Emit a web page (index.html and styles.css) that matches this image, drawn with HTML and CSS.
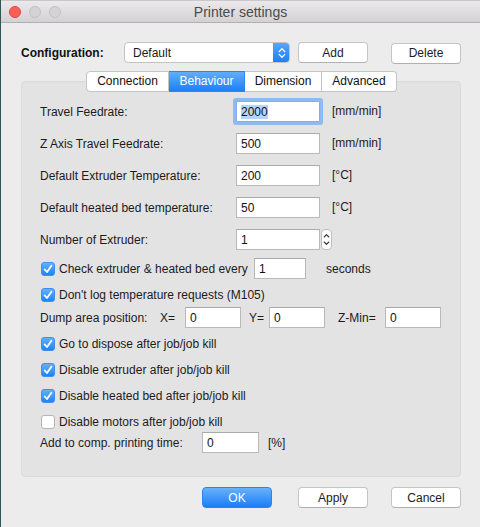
FILE: index.html
```html
<!DOCTYPE html>
<html>
<head>
<meta charset="utf-8">
<link rel="stylesheet" href="styles.css">
</head>
<body>
<div class="window">
  <div class="titlebar">
    <div class="lights">
      <span class="light red"></span>
      <span class="light gray"></span>
      <span class="light gray"></span>
    </div>
    <div class="title">Printer settings</div>
    <div></div>
  </div>
  <div class="content">
    <div class="config-row">
      <div class="config-label">Configuration:</div>
      <div class="combo">
        <span class="combo-text">Default</span>
        <span class="combo-arrows">
          <svg width="8" height="12" viewBox="0 0 8 12"><path d="M1.2 4.6 L4 1.8 L6.8 4.6 M1.2 7.4 L4 10.2 L6.8 7.4" fill="none" stroke="#fff" stroke-width="1.3" stroke-linecap="round" stroke-linejoin="round"/></svg>
        </span>
      </div>
      <button class="btn btn-add">Add</button>
      <button class="btn btn-delete">Delete</button>
    </div>
    <div class="tabs">
      <div class="tab t-conn">Connection</div>
      <div class="tab t-beh active">Behaviour</div>
      <div class="tab t-dim">Dimension</div>
      <div class="tab t-adv">Advanced</div>
    </div>
    <div class="group">
      <div class="row field first">
        <div class="label">Travel Feedrate:</div>
        <div class="input wide focus"><span class="sel">2000</span></div>
        <div class="unit">[mm/min]</div>
      </div>
      <div class="row field">
        <div class="label">Z Axis Travel Feedrate:</div>
        <div class="input wide">500</div>
        <div class="unit">[mm/min]</div>
      </div>
      <div class="row field">
        <div class="label">Default Extruder Temperature:</div>
        <div class="input wide">200</div>
        <div class="unit">[°C]</div>
      </div>
      <div class="row field">
        <div class="label">Default heated bed temperature:</div>
        <div class="input wide">50</div>
        <div class="unit">[°C]</div>
      </div>
      <div class="row field">
        <div class="label">Number of Extruder:</div>
        <div class="input wide">1</div>
        <div class="spin">
          <svg width="9" height="19" viewBox="0 0 9 19"><path d="M2.2 7 L4.5 4.6 L6.8 7 M2.2 12 L4.5 14.4 L6.8 12" fill="none" stroke="#333" stroke-width="1.1" stroke-linecap="round" stroke-linejoin="round"/></svg>
        </div>
      </div>
      <div class="row check-every">
        <span class="cb on"><svg width="14" height="14" viewBox="0 0 14 14"><path d="M3.6 7.4 L6 10 L10.4 3.8" fill="none" stroke="#fff" stroke-width="1.8" stroke-linecap="round" stroke-linejoin="round"/></svg></span>
        <span class="cb-label every-label">Check extruder &amp; heated bed every</span>
        <div class="input small">1</div>
        <div class="seconds">seconds</div>
      </div>
      <div class="row chk gap9">
        <span class="cb on"><svg width="14" height="14" viewBox="0 0 14 14"><path d="M3.6 7.4 L6 10 L10.4 3.8" fill="none" stroke="#fff" stroke-width="1.8" stroke-linecap="round" stroke-linejoin="round"/></svg></span>
        <span class="cb-label">Don't log temperature requests (M105)</span>
      </div>
      <div class="row dump">
        <div class="dump-label">Dump area position:</div>
        <div class="axis ax-x">X=</div>
        <div class="input coord">0</div>
        <div class="axis ax-y">Y=</div>
        <div class="input coord">0</div>
        <div class="axis ax-z">Z-Min=</div>
        <div class="input coord">0</div>
      </div>
      <div class="row chk gap9">
        <span class="cb on"><svg width="14" height="14" viewBox="0 0 14 14"><path d="M3.6 7.4 L6 10 L10.4 3.8" fill="none" stroke="#fff" stroke-width="1.8" stroke-linecap="round" stroke-linejoin="round"/></svg></span>
        <span class="cb-label">Go to dispose after job/job kill</span>
      </div>
      <div class="row chk gap12">
        <span class="cb on"><svg width="14" height="14" viewBox="0 0 14 14"><path d="M3.6 7.4 L6 10 L10.4 3.8" fill="none" stroke="#fff" stroke-width="1.8" stroke-linecap="round" stroke-linejoin="round"/></svg></span>
        <span class="cb-label">Disable extruder after job/job kill</span>
      </div>
      <div class="row chk gap12">
        <span class="cb on"><svg width="14" height="14" viewBox="0 0 14 14"><path d="M3.6 7.4 L6 10 L10.4 3.8" fill="none" stroke="#fff" stroke-width="1.8" stroke-linecap="round" stroke-linejoin="round"/></svg></span>
        <span class="cb-label">Disable heated bed after job/job kill</span>
      </div>
      <div class="row chk gap12">
        <span class="cb"></span>
        <span class="cb-label">Disable motors after job/job kill</span>
      </div>
      <div class="row comp">
        <div class="comp-label">Add to comp. printing time:</div>
        <div class="input comp-input">0</div>
        <div class="comp-unit">[%]</div>
      </div>
    </div>
    <div class="buttons">
      <button class="btn btn-ok">OK</button>
      <button class="btn btn-apply">Apply</button>
      <button class="btn btn-cancel">Cancel</button>
    </div>
  </div>
</div>
</body>
</html>
```
FILE: styles.css
```css
html, body {
  margin: 0;
  padding: 0;
}
body {
  width: 480px;
  height: 527px;
  overflow: hidden;
  background: #ececec;
  font-family: "Liberation Sans", Arial, sans-serif;
  font-size: 12px;
  color: #1c1c1c;
}
.window {
  box-sizing: border-box;
  width: 480px;
  height: 527px;
  border-left: 1px solid #2f5557;
  background: #ececec;
}
.titlebar {
  box-sizing: border-box;
  height: 23px;
  border-top: 1px solid #c9c7c9;
  border-bottom: 1px solid #b1afb1;
  background: linear-gradient(#ebe9eb, #d3d1d3);
  display: grid;
  grid-template-columns: 1fr auto 1fr;
  align-items: center;
}
.lights {
  display: flex;
  gap: 8px;
  padding-left: 8px;
  padding-top: 1px;
}
.light {
  box-sizing: border-box;
  width: 12px;
  height: 12px;
  border-radius: 50%;
}
.light.red {
  background: #fc5f57;
  border: 1px solid #e0443e;
}
.light.gray {
  background: #d5d3d5;
  border: 1px solid #c2c0c2;
}
.title {
  font-size: 14px;
  color: #4b4b4b;
  padding-top: 1px;
}
.content {
  padding: 0 19px 0 20px;
}
.config-row {
  display: flex;
  align-items: center;
  margin-top: 19px;
  height: 21px;
}
.config-label {
  width: 103px;
  font-weight: bold;
  color: #111;
}
.combo {
  box-sizing: border-box;
  width: 166px;
  height: 21px;
  background: #fff;
  border: 1px solid #c3c3c3;
  border-radius: 4px;
  display: flex;
  align-items: center;
  justify-content: space-between;
  overflow: hidden;
}
.combo-text {
  padding-left: 8px;
  color: #1a1a1a;
}
.combo-arrows {
  width: 17px;
  height: 21px;
  margin-right: -1px;
  background: linear-gradient(#5aa8fb, #1a7ff6);
  display: flex;
  align-items: center;
  justify-content: center;
}
.btn {
  box-sizing: border-box;
  height: 21px;
  width: 70px;
  padding: 0;
  background: #fff;
  border: 1px solid #c4c4c4;
  border-bottom-color: #b0b0b0;
  border-radius: 4px;
  font-family: inherit;
  font-size: 12px;
  color: #1c1c1c;
}
.btn-add {
  margin-left: 8px;
}
.btn-delete {
  margin-left: 23px;
  margin-top: 1px;
}
.tabs {
  display: flex;
  justify-content: center;
  margin-top: 8px;
  margin-bottom: -11px;
  position: relative;
  z-index: 1;
  padding-left: 1px;
}
.tab {
  box-sizing: border-box;
  height: 21px;
  line-height: 19px;
  text-align: center;
  background: #fff;
  border: 1px solid #c4c4c4;
  border-left: none;
  color: #111;
}
.t-conn {
  width: 83px;
  border-left: 1px solid #c4c4c4;
  border-radius: 4px 0 0 4px;
}
.t-beh {
  width: 76px;
}
.t-dim {
  width: 77px;
}
.t-adv {
  width: 75px;
  border-radius: 0 4px 4px 0;
}
.tab.active {
  background: linear-gradient(#62adfa, #1b80f6);
  border-color: #2b86f0;
  color: #fff;
}
.group {
  box-sizing: border-box;
  width: 440px;
  height: 396px;
  background: #e3e3e3;
  border: 1px solid #dadada;
  border-radius: 4px;
  padding: 19px 0 0 18px;
}
.row {
  display: flex;
  align-items: center;
}
.field {
  height: 21px;
  margin-top: 11px;
}
.field.first {
  margin-top: 0;
}
.label {
  width: 196px;
}
.input {
  box-sizing: border-box;
  height: 21px;
  background: #fff;
  border: 1px solid #b9b9b9;
  border-top-color: #a9a9a9;
  padding-left: 4px;
  display: flex;
  align-items: center;
  color: #111;
}
.input.wide {
  width: 84px;
}
.input.focus {
  border-color: #7fb0ee;
  box-shadow: 0 0 0 3px #8cbaf1;
  border-radius: 1px;
}
.sel {
  background: #b5d5fd;
  line-height: 14px;
}
.unit {
  margin-left: 12px;
  margin-top: -1px;
}
.spin {
  box-sizing: border-box;
  width: 11px;
  height: 21px;
  margin-left: 1px;
  background: #fff;
  border: 1px solid #bdbdbd;
  border-radius: 4px;
  display: flex;
  align-items: center;
  justify-content: center;
}
.cb {
  box-sizing: border-box;
  width: 14px;
  height: 14px;
  margin-left: 1px;
  border-radius: 3px;
  background: #fff;
  border: 1px solid #b6b6b6;
  display: flex;
  align-items: center;
  justify-content: center;
  flex-shrink: 0;
}
.cb.on {
  background: linear-gradient(#64b0fb, #1d84f7);
  border: 1px solid #3d8ff0;
}
.cb.on svg {
  margin: -1px;
}
.cb-label {
  margin-left: 4px;
}
.check-every {
  height: 21px;
  margin-top: 8px;
}
.every-label {
  width: 195px;
}
.input.small {
  width: 52px;
}
.seconds {
  margin-left: 20px;
}
.chk {
  height: 14px;
}
.gap9 {
  margin-top: 9px;
}
.gap12 {
  margin-top: 12px;
}
.dump {
  height: 21px;
  margin-top: 5px;
}
.dump-label {
  width: 120px;
}
.axis.ax-x {
  width: 25px;
}
.axis.ax-y {
  width: 20px;
  margin-left: 8px;
}
.axis.ax-z {
  width: 47px;
  margin-left: 13px;
}
.input.coord {
  width: 56px;
}
.comp {
  height: 21px;
  margin-top: 3px;
}
.comp-label {
  width: 162px;
}
.input.comp-input {
  width: 57px;
}
.comp-unit {
  margin-left: 9px;
}
.buttons {
  display: flex;
  margin-top: 10px;
  padding-left: 181px;
}
.btn-ok {
  background: linear-gradient(#69b1fa, #1a7ef5);
  border: 1px solid #2a84ef;
  color: #fff;
}
.btn-apply {
  margin-left: 26px;
}
.btn-cancel {
  margin-left: 23px;
}
```
